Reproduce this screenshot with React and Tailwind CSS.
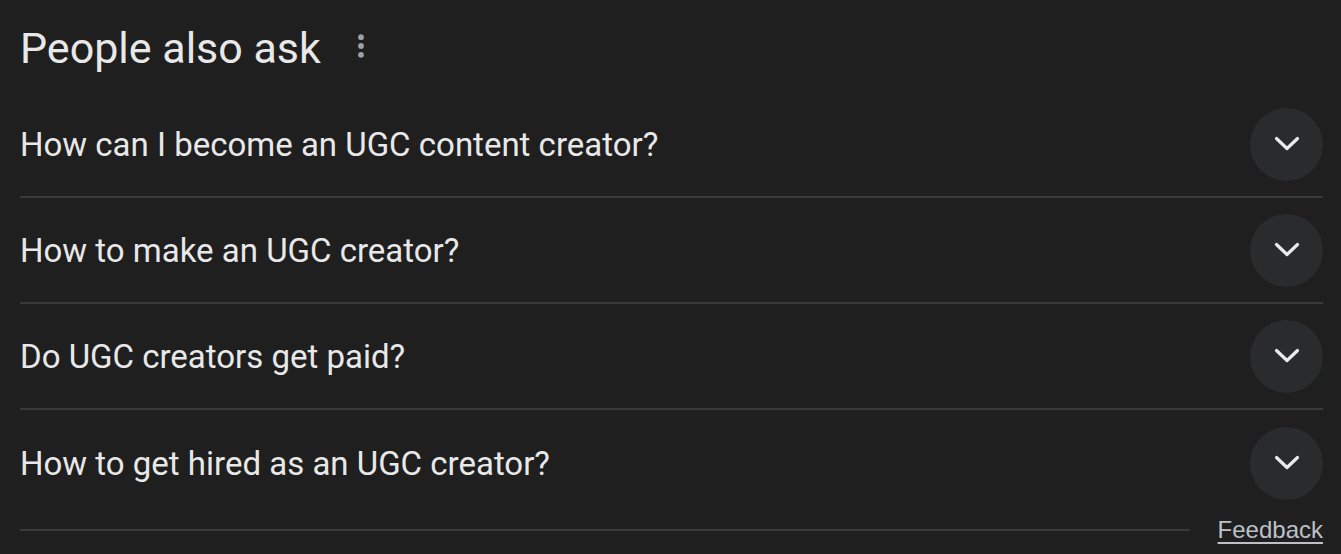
import React from "react";

const questions = [
  "How can I become an UGC content creator?",
  "How to make an UGC creator?",
  "Do UGC creators get paid?",
  "How to get hired as an UGC creator?",
];

function Chevron() {
  return (
    <svg width="26" height="16" viewBox="0 0 26 16" fill="none">
      <path d="M2.5 2.5 L13 12.5 L23.5 2.5" stroke="#e8eaed" strokeWidth="3.2" strokeLinecap="round" strokeLinejoin="round" />
    </svg>
  );
}

export default function App() {
  return (
    <div className="w-[1341px] h-[554px] bg-[#1f1f1f] overflow-hidden pl-[20px] pr-[18px] text-[#e8e8e8]" style={{ fontFamily: "Roboto, Arial, sans-serif" }}>
      <div className="h-[92px] flex items-center gap-[36px] pt-[4px]">
        <h2 className="text-[43px] leading-none font-normal">People also ask</h2>
        <svg width="8" height="24" viewBox="0 0 8 24" className="mt-[-4px]">
          <circle cx="4" cy="3.2" r="2.9" fill="#9aa0a6" />
          <circle cx="4" cy="12" r="2.9" fill="#9aa0a6" />
          <circle cx="4" cy="20.8" r="2.9" fill="#9aa0a6" />
        </svg>
      </div>
      {questions.map((q, i) => (
        <div key={i} className={`h-[106px] flex items-center justify-between ${i < 3 ? "border-b-2 border-[#3a3a3a]" : ""}`}>
          <span className="text-[33px] leading-none">{q}</span>
          <div className="w-[73px] h-[73px] rounded-full bg-[#2a2b2d] flex items-center justify-center">
            <Chevron />
          </div>
        </div>
      ))}
      <div className="flex items-center gap-[28px] h-[28px]">
        <div className="flex-1 h-[2px] bg-[#3a3a3a]" />
        <a className="text-[24px] leading-none text-[#bdc1c6] underline underline-offset-[4px]" style={{ fontFamily: "Arial, 'Liberation Sans', sans-serif" }}>Feedback</a>
      </div>
    </div>
  );
}
